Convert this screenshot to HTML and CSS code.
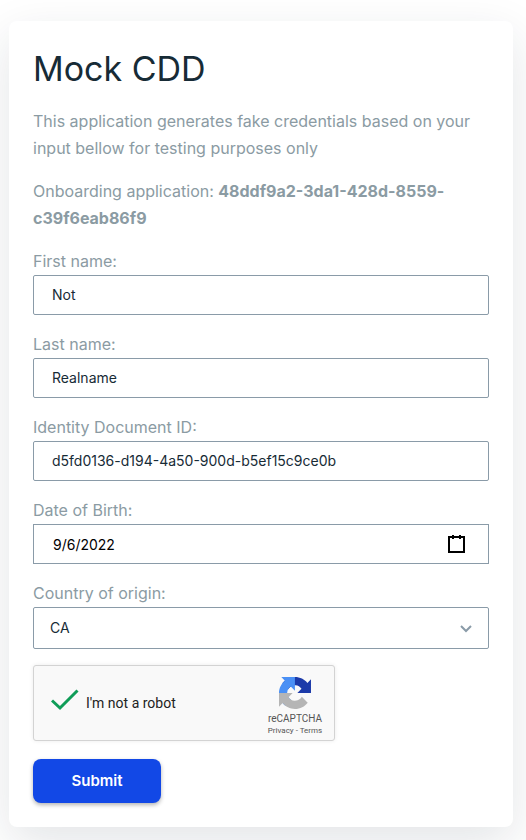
FILE: index.html
```html
<!DOCTYPE html>
<html lang="en">
<head>
<meta charset="utf-8">
<meta name="viewport" content="width=device-width, initial-scale=1">
<title>Mock CDD</title>
<link rel="stylesheet" href="styles.css">
</head>
<body>
<main class="card">
  <h1 class="title">Mock CDD</h1>
  <p class="text">This application generates fake credentials based on your input bellow for testing purposes only</p>
  <p class="text">Onboarding application: <strong>48ddf9a2-3da1-428d-8559-c39f6eab86f9</strong></p>
  <form>
    <div class="field">
      <label for="first">First name:</label>
      <input class="control" id="first" type="text" value="Not">
    </div>
    <div class="field">
      <label for="last">Last name:</label>
      <input class="control" id="last" type="text" value="Realname">
    </div>
    <div class="field">
      <label for="document">Identity Document ID:</label>
      <input class="control" id="document" type="text" value="d5fd0136-d194-4a50-900d-b5ef15c9ce0b">
    </div>
    <div class="field">
      <label for="birth">Date of Birth:</label>
      <div class="wrap">
        <input class="control date" id="birth" type="text" value="9/6/2022">
        <button class="calendar" type="button" aria-label="Choose date">
          <svg width="17" height="18" viewBox="0 0 17 18" shape-rendering="crispEdges"><path fill="#000" fill-rule="evenodd" d="M0 1h4V0h2v1h5V0h2v1h4v17H0zM2 3v13h13V3h-2v1h-2V3H6v1H4V3z"/></svg>
        </button>
      </div>
    </div>
    <div class="field">
      <label for="country">Country of origin:</label>
      <div class="wrap">
        <select class="control select" id="country"><option>CA</option></select>
        <svg class="chevron" width="12" height="8" viewBox="0 0 12 8"><path d="M1 1l5 5 5-5" fill="none" stroke="#8a9ba8" stroke-width="2"/></svg>
      </div>
    </div>
    <div class="captcha">
      <svg class="check" width="28" height="22" viewBox="0 0 28 22"><path d="M1 11.500l8 7.500L26.500 1.500" fill="none" stroke="#0f9d58" stroke-width="3"/></svg>
      <span class="robot">I'm not a robot</span>
      <div class="brand">
        <svg width="32" height="32" viewBox="0 0 64 64">
          <path fill="#1c3aa9" d="M64 31.955l-.033-1.37V4.687l-7.16 7.16C50.948 4.674 42.033.093 32.05.093c-10.4 0-19.622 4.96-25.458 12.64l11.736 11.86a15.55 15.55 0 0 1 4.754-5.334c2.05-1.6 4.952-2.906 8.968-2.906.485 0 .86.057 1.135.163 4.976.393 9.288 3.14 11.828 7.124l-8.307 8.307L64 31.953"/>
          <path fill="#4a90f5" d="M31.862.094l-1.37.033H4.594l7.16 7.16C4.58 13.147 0 22.06 0 32.046c0 10.4 4.96 19.622 12.64 25.458L24.5 45.768a15.55 15.55 0 0 1-5.334-4.754c-1.6-2.05-2.906-4.952-2.906-8.968 0-.485.057-.86.163-1.135.393-4.976 3.14-9.288 7.124-11.828l8.307 8.307L31.86.095"/>
          <path fill="#b5b5b5" d="M.001 32.045l.033 1.37v25.898l7.16-7.16c5.86 7.173 14.774 11.754 24.76 11.754 10.4 0 19.622-4.96 25.458-12.64l-11.736-11.86a15.55 15.55 0 0 1-4.754 5.334c-2.05 1.6-4.952 2.906-8.968 2.906-.485 0-.86-.057-1.135-.163-4.976-.393-9.288-3.14-11.828-7.124l8.307-8.307c-10.522.04-22.4.066-27.295-.005"/>
        </svg>
        <span class="brand-name">reCAPTCHA</span>
        <span class="legal"><a href="#">Privacy</a> - <a href="#">Terms</a></span>
      </div>
    </div>
    <button class="submit" type="submit">Submit</button>
  </form>
</main>
</body>
</html>
```
FILE: styles.css
```css
* {
  box-sizing: border-box;
}

body {
  margin: 0;
  padding: 21px 13px 13px 9px;
  overflow-x: hidden;
  background: #fff;
  color: #8b9ba3;
  font: 16px/27px Inter, sans-serif;
}

.card {
  padding: 24px;
  border-radius: 8px;
  background: #fff;
  box-shadow: 0 16px 48px rgba(23, 43, 54, 0.12);
}

.title {
  margin: 0 0 16px;
  color: #172b36;
  font-size: 34px;
  font-weight: 400;
  line-height: 47px;
}

.text {
  margin: 0 0 16px;
}

.field {
  margin-bottom: 16px;
}

.field label {
  display: block;
}

.wrap {
  position: relative;
}

.control {
  display: block;
  width: 100%;
  height: 40px;
  margin: 0;
  padding: 0 18px 2px;
  border: 1px solid #8a9ba8;
  border-radius: 2px;
  outline: 0;
  background: #fff;
  color: #172b36;
  font: 14px Inter, sans-serif;
}

.date {
  padding: 0 19px;
  border-radius: 0;
  color: #000;
}

.calendar {
  position: absolute;
  top: 11px;
  right: 24px;
  display: flex;
  padding: 0;
  border: 0;
  background: none;
}

.select {
  height: 42px;
  padding: 0 16px 2px;
  appearance: none;
}

.chevron {
  position: absolute;
  top: 18px;
  right: 17px;
  pointer-events: none;
}

.captcha {
  display: flex;
  align-items: center;
  width: 302px;
  max-width: 100%;
  height: 76px;
  margin-bottom: 18px;
  padding: 0 7px 0 17px;
  border: 1px solid #d3d3d3;
  border-radius: 3px;
  background: #f9f9f9;
  box-shadow: 0 0 4px rgba(0, 0, 0, 0.08);
  color: #222;
  font-family: Roboto, sans-serif;
}

.check {
  margin-bottom: 6px;
}

.robot {
  margin-left: 7px;
  font-size: 14px;
}

.brand {
  display: flex;
  flex-direction: column;
  align-items: center;
  width: 64px;
  margin-top: 7px;
  margin-left: auto;
  color: #555;
}

.brand-name {
  margin-top: 3px;
  font-size: 10px;
  line-height: 13px;
}

.legal {
  font-size: 8px;
  line-height: 12px;
  white-space: nowrap;
}

.legal a {
  color: inherit;
  text-decoration: none;
}

.submit {
  display: block;
  width: 128px;
  height: 44px;
  padding: 0 0 2px;
  border: 0;
  border-radius: 8px;
  background: #1248e6;
  box-shadow: 0 2px 4px rgba(0, 0, 0, 0.3);
  color: #fff;
  font: 600 15px Inter, sans-serif;
}
```
